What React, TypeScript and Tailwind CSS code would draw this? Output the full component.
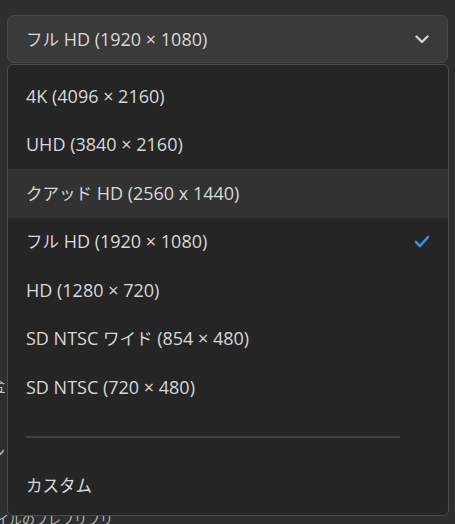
import { useState } from 'react'

interface Option {
  id: string
  jp?: string
  rest: string
}

const options: Option[] = [
  { id: '4k', rest: '4K (4096 × 2160)' },
  { id: 'uhd', rest: 'UHD (3840 × 2160)' },
  { id: 'qhd', jp: 'クアッド', rest: ' HD (2560 x 1440)' },
  { id: 'fhd', jp: 'フル', rest: ' HD (1920 × 1080)' },
  { id: 'hd', rest: 'HD (1280 × 720)' },
  { id: 'sdw', jp: 'ワイド', rest: ' (854 × 480)' },
  { id: 'sd', rest: 'SD NTSC (720 × 480)' },
]

const font = { fontFamily: '"Open Sans", "Noto Sans CJK JP", sans-serif' }

function Chevron() {
  return (
    <svg width="14" height="9" viewBox="0 0 14 9" fill="none">
      <path d="M1.5 1.5 L7 7 L12.5 1.5" stroke="#cfcfcf" strokeWidth="2.4" strokeLinecap="round" strokeLinejoin="round" />
    </svg>
  )
}

function Check() {
  return (
    <svg width="16" height="13" viewBox="0 0 16 13" fill="none">
      <path d="M2 7 L6 11 L14 2" stroke="#378ef0" strokeWidth="2.6" strokeLinecap="round" strokeLinejoin="round" />
    </svg>
  )
}

function Label({ opt }: { opt: Option }) {
  if (opt.id === 'sdw') {
    return (
      <span className="text-[18px]">
        SD NTSC <span className="text-[16.5px]">{opt.jp}</span>{opt.rest}
      </span>
    )
  }
  return (
    <span className="text-[18px]">
      {opt.jp && <span className="text-[16.5px]">{opt.jp}</span>}
      {opt.rest}
    </span>
  )
}

export default function App() {
  const [selected] = useState('fhd')
  const [hovered] = useState('qhd')

  return (
    <div className="relative h-[524px] w-[455px] overflow-hidden bg-[#2e2e2e] text-[#d8d8d8]" style={font}>
      {/* Settings underneath the open menu */}
      <div className="absolute left-[-10px] top-[374px] flex flex-col gap-[44px] text-[15px] text-[#bdbdbd]">
        <span className="underline">合</span>
        <span>ン</span>
      </div>
      <div className="absolute left-[-4px] top-[510px] text-[13px] text-[#bdbdbd]">イルのプレフリフリ</div>

      {/* Select trigger */}
      <div className="px-[7px] pt-[15px]">
        <div className="flex h-[48px] items-center justify-between rounded-[7px] border border-[#4a4a4a] bg-[#3a3a3a] pl-[18px] pr-[18px]">
          <span className="text-[18px]">
            <span className="text-[16.5px]">フル</span> HD (1920 × 1080)
          </span>
          <Chevron />
        </div>
      </div>

      {/* Open menu */}
      <div className="absolute left-[7px] top-[64px] h-[452px] w-[442px] rounded-[6px] border border-[#4d4d4d] bg-[#252525] py-[7px]">
        {options.map(opt => (
          <div
            key={opt.id}
            className={
              opt.id === hovered
                ? 'flex h-[48.5px] items-center justify-between bg-[#323232] pl-[18px] pr-[18px]'
                : 'flex h-[48.5px] items-center justify-between pl-[18px] pr-[18px]'
            }
          >
            <Label opt={opt} />
            {opt.id === selected && <Check />}
          </div>
        ))}
        <div className="flex h-[50px] items-center pl-[18px] pr-[48px]">
          <div className="h-[2px] w-full bg-[#3f3f3f]" />
        </div>
        <div className="flex h-[50px] items-center pl-[18px]">
          <span className="text-[16.5px]">カスタム</span>
        </div>
      </div>
    </div>
  )
}
